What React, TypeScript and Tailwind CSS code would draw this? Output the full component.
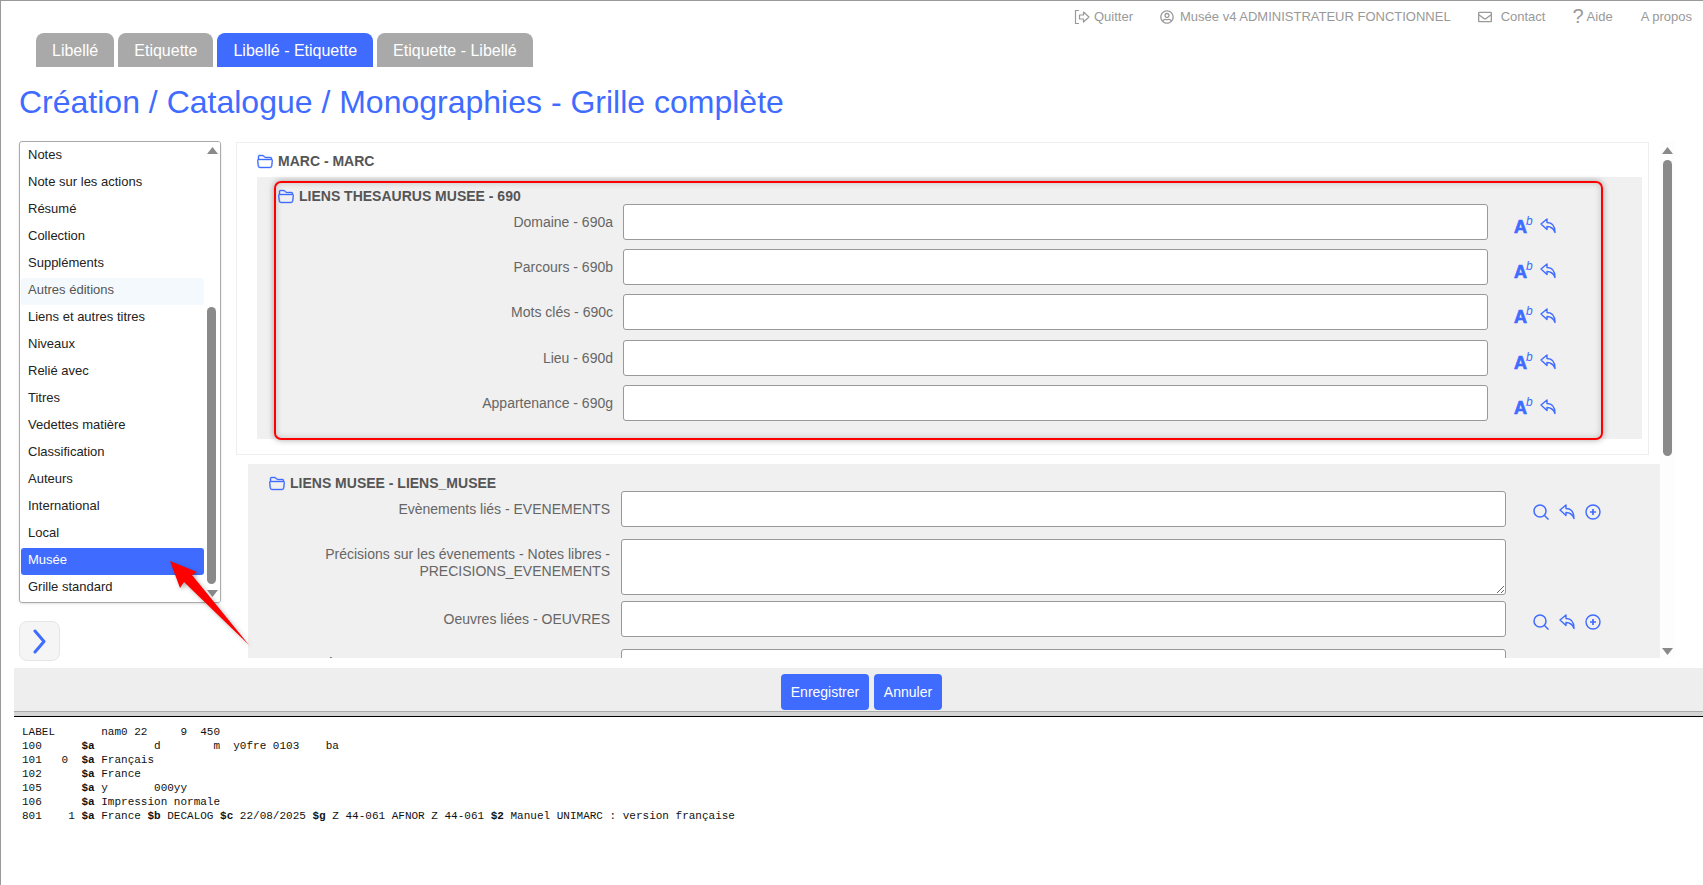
import { FaRegEnvelope, FaRegUserCircle } from 'react-icons/fa';
import { BsFolder2Open } from 'react-icons/bs';

const TABS = ['Libellé', 'Etiquette', 'Libellé - Etiquette', 'Etiquette - Libellé'];

const MENU = [
  'Notes',
  'Note sur les actions',
  'Résumé',
  'Collection',
  'Suppléments',
  'Autres éditions',
  'Liens et autres titres',
  'Niveaux',
  'Relié avec',
  'Titres',
  'Vedettes matière',
  'Classification',
  'Auteurs',
  'International',
  'Local',
  'Musée',
  'Grille standard',
];

const THESAURUS = ['Domaine - 690a', 'Parcours - 690b', 'Mots clés - 690c', 'Lieu - 690d', 'Appartenance - 690g'];

function Arrow({ up }: { up?: boolean }) {
  return (
    <svg width="11" height="7" viewBox="0 0 11 7" className="block">
      <polygon points={up ? '5.5,0 11,7 0,7' : '0,0 11,0 5.5,7'} fill="#8a8a8a" />
    </svg>
  );
}

function QuitIcon() {
  return (
    <svg width="16" height="16" viewBox="0 0 16 16" fill="none" stroke="#999" strokeWidth="1.2">
      <path d="M5 1.5H1.5v13H5" />
      <path d="M5.5 6h4V3l5.5 5-5.5 5v-3h-4z" strokeLinejoin="round" />
    </svg>
  );
}

function AbIcon() {
  return (
    <span className="relative block w-[16px] h-[16px] text-[#3f6bff]">
      <span className="absolute left-0 top-[1px] text-[18px] leading-[16px] font-bold [-webkit-text-stroke:0.7px_#3f6bff]">A</span>
      <span className="absolute left-[12px] top-[-3px] text-[12px] leading-[12px] italic">b</span>
    </span>
  );
}

function ReplyIcon() {
  return (
    <svg width="16" height="16" viewBox="0 0 16 16" fill="none" stroke="#3f6bff" strokeWidth="1.4" strokeLinejoin="round">
      <path d="M1 6 7 1v3.5c5 0 8 3.5 8 10-1.5-4-4-6-8-6V11.5z" />
    </svg>
  );
}

function SearchIcon() {
  return (
    <svg width="16" height="16" viewBox="0 0 16 16" fill="none" stroke="#3f6bff" strokeWidth="1.5">
      <circle cx="7" cy="7" r="6" />
      <path d="M11.5 11.5 15.5 15.5" />
    </svg>
  );
}

function PlusIcon() {
  return (
    <svg width="16" height="16" viewBox="0 0 16 16" fill="none" stroke="#3f6bff" strokeWidth="1.4">
      <circle cx="8" cy="8" r="7" />
      <path d="M8 5v6M5 8h6" strokeWidth="1.7" />
    </svg>
  );
}

function Title({ children }: { children: string }) {
  return (
    <div className="flex items-center gap-[5px] text-[14px] font-bold text-[#555] leading-[16px]">
      <BsFolder2Open size={16} className="text-[#3f6bff] [stroke-width:0.4] stroke-current" />
      <span>{children}</span>
    </div>
  );
}

function Row({ label }: { label: string }) {
  return (
    <div className="flex h-[48px]">
      <div className="w-[362px] text-right text-[14px] text-[#666] pt-[10px] leading-[17px]">{label}</div>
      <input className="ml-[11px] w-[885px] h-[36px] bg-white border border-[#999] rounded-[3px]" />
      <div className="flex gap-[10px] ml-[27px] pt-[13px]">
        <SearchIcon />
        <ReplyIcon />
        <PlusIcon />
      </div>
    </div>
  );
}

function Console() {
  return (
    <pre className="pl-[8px] pt-[8px] font-['Liberation_Mono',monospace] text-[11px] leading-[14px] text-[#111]">
      {'LABEL       nam0 22     9  450\n'}
      {'100      '}<b>$a</b>{'         d        m  y0fre 0103    ba\n'}
      {'101   0  '}<b>$a</b>{' Français\n'}
      {'102      '}<b>$a</b>{' France\n'}
      {'105      '}<b>$a</b>{' y       000yy\n'}
      {'106      '}<b>$a</b>{' Impression normale\n'}
      {'801    1 '}<b>$a</b>{' France '}<b>$b</b>{' DECALOG '}<b>$c</b>{' 22/08/2025 '}<b>$g</b>{' Z 44-061 AFNOR Z 44-061 '}<b>$2</b>{' Manuel UNIMARC : version française'}
    </pre>
  );
}

export default function App() {
  return (
    <div className="relative h-[885px] overflow-hidden bg-white border-t border-l border-[#999] font-['Liberation_Sans',Arial,sans-serif]">
      {/* top links */}
      <div className="flex items-center h-[32px] pl-[1073px] text-[13px] text-[#999] whitespace-nowrap">
        <QuitIcon />
        <span className="ml-[4px]">Quitter</span>
        <FaRegUserCircle size={14} className="ml-[27px]" />
        <span className="ml-[6px]">Musée v4 ADMINISTRATEUR FONCTIONNEL</span>
        <FaRegEnvelope size={14} className="ml-[27px]" />
        <span className="ml-[9px]">Contact</span>
        <span className="ml-[27px] text-[20px] leading-[20px] -mt-[3px]">?</span>
        <span className="ml-[3px]">Aide</span>
        <span className="ml-[28px]">A propos</span>
      </div>

      <div className="flex gap-[4px] pl-[35px] h-[34px]">
        {TABS.map(t => (
          <div
            key={t}
            className={`flex items-center px-[16px] pt-[1px] rounded-t-[8px] text-[16px] text-white ${
              t === 'Libellé - Etiquette' ? 'bg-[#3f6bff]' : 'bg-[#a9a9a9]'
            }`}
          >
            {t}
          </div>
        ))}
      </div>

      <h1 className="pl-[18px] pt-[17px] h-[74px] text-[32px] leading-[37px] text-[#3f6bff]">
        Création / Catalogue / Monographies - Grille complète
      </h1>

      <div className="flex h-[517px] pl-[18px]">
        {/* left menu */}
        <div className="w-[202px] shrink-0">
          <div className="relative h-[462px] border border-[#aaa] rounded-[3px] shadow-sm pl-[1px] pt-[1px] overflow-hidden">
            {MENU.map(m => (
              <div
                key={m}
                className={`flex items-center h-[27px] w-[183px] pl-[7px] pb-[3px] text-[13px] rounded-[3px] ${
                  m === 'Musée'
                    ? 'bg-[#3f6bff] text-white'
                    : m === 'Autres éditions'
                      ? 'bg-[#f3f9fc] text-[#555]'
                      : 'text-[#222]'
                }`}
              >
                {m}
              </div>
            ))}
            <div className="absolute right-0 top-0 bottom-0 w-[16px] bg-white flex flex-col items-center justify-between py-[5px]">
              <Arrow up />
              <div className="absolute top-[165px] left-[3px] w-[9px] h-[277px] rounded-full bg-[#8a8a8a]" />
              <Arrow />
            </div>
          </div>
          <button className="mt-[18px] flex items-center justify-center w-[41px] h-[40px] rounded-[8px] bg-[#f5f5f5] border border-[#e6e6e6]">
            <svg width="13" height="25" viewBox="0 0 13 25" fill="none" stroke="#3f6bff" strokeWidth="3" strokeLinecap="round" strokeLinejoin="round">
              <path d="M2 2 11 12.5 2 23" />
            </svg>
          </button>
        </div>

        {/* form area */}
        <div className="flex ml-[15px] w-[1439px] h-full overflow-hidden">
          <div className="w-[1424px] overflow-hidden">
            <div className="w-[1413px] mt-[1px] h-[313px] border border-[#eee] bg-white pl-[20px] pr-[6px]">
              <div className="pt-[10px] h-[34px]">
                <Title>MARC - MARC</Title>
              </div>
              <div className="h-[262px] bg-[#f0f0f0]">
                <div className="pl-[21px] pt-[11px] h-[27px]">
                  <Title>LIENS THESAURUS MUSEE - 690</Title>
                </div>
                {THESAURUS.map(l => (
                  <div key={l} className="flex h-[45.2px]">
                    <div className="w-[356px] text-right text-[14px] text-[#666] pt-[10px] leading-[17px]">{l}</div>
                    <input className="ml-[10px] w-[865px] h-[36px] bg-white border border-[#999] rounded-[3px]" />
                    <div className="flex gap-[10px] ml-[26px] pt-[14px]">
                      <AbIcon />
                      <ReplyIcon />
                    </div>
                  </div>
                ))}
              </div>
            </div>

            <div className="ml-[12px] mt-[9px] h-[300px] bg-[#f0f0f0]">
              <div className="pl-[21px] pt-[11px] h-[27px]">
                <Title>LIENS MUSEE - LIENS_MUSEE</Title>
              </div>
              <Row label="Evènements liés - EVENEMENTS" />
              <div className="flex h-[62px]">
                <div className="w-[362px] text-right text-[14px] text-[#666] pt-[7px] leading-[17px]">
                  Précisions sur les évenements - Notes libres - PRECISIONS_EVENEMENTS
                </div>
                <textarea className="ml-[11px] w-[885px] h-[56px] bg-white border border-[#999] rounded-[3px]" />
              </div>
              <Row label="Oeuvres liées - OEUVRES" />
              <div className="flex h-[62px]">
                <div className="w-[362px] text-right text-[14px] text-[#666] pt-[8px] leading-[17px]">
                  Éléments sur les oeuvres liées - Notes libres - PRECISIONS_OEUVRES
                </div>
                <textarea className="ml-[11px] w-[885px] h-[56px] bg-white border border-[#999] rounded-[3px]" />
              </div>
            </div>
          </div>
          <div className="relative w-[15px] bg-[#fdfdfd] flex flex-col items-center justify-between pt-[6px] pb-[3px]">
            <Arrow up />
            <div className="absolute top-[19px] left-[3px] w-[9px] h-[296px] rounded-full bg-[#8a8a8a]" />
            <Arrow />
          </div>
        </div>
      </div>

      {/* action bar */}
      <div className="ml-[13px] mt-[10px] h-[43px] bg-[#eeeeee] flex justify-center items-start gap-[5px] pt-[6px] pl-[6px]">
        <button className="w-[88px] h-[36px] rounded-[4px] bg-[#3f6bff] text-white text-[14px]">Enregistrer</button>
        <button className="w-[68px] h-[36px] rounded-[4px] bg-[#3f6bff] text-white text-[14px]">Annuler</button>
      </div>
      <div className="ml-[13px] h-[5px] bg-[#d4d4d4] border-t border-[#aaa]" />
      <div className="ml-[13px] border-t border-black">
        <Console />
      </div>

      {/* annotations */}
      <div className="absolute left-[273px] top-[180px] w-[1329px] h-[259px] border-2 border-[#f00] rounded-[7px] shadow-[0_0_6px_rgba(0,0,0,0.35),inset_0_0_6px_rgba(0,0,0,0.2)]" />
      <svg className="absolute left-[149px] top-[539px] drop-shadow-[2px_2px_2px_rgba(0,0,0,0.3)]" width="110" height="115" viewBox="150 540 110 115">
        <polygon points="170,561 197,572 192,575 249,645 184,582 180,588" fill="#f00" />
      </svg>
    </div>
  );
}
